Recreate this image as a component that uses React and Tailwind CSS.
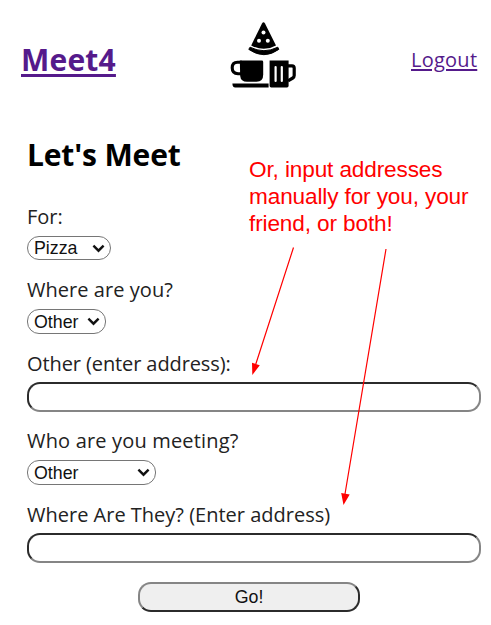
import React from "react";

function Logo() {
  return (
    <svg width="68" height="68" viewBox="0 0 68 68" className="block">
      <path d="M32 1.4Q33.5 -0.8 35 1.4L46 23.4Q34 30.2 21.2 23.4Z" fill="#000" />
      <path d="M20 25.2Q34 32.2 47.8 25.2L48.8 27.4Q34 38 18.8 27.4Z" fill="#000" stroke="#000" strokeWidth="1" strokeLinejoin="round" />
      <circle cx="33.5" cy="10.4" r="2" fill="#fff" />
      <circle cx="29" cy="18.8" r="2" fill="#fff" />
      <circle cx="37.8" cy="18.8" r="2" fill="#fff" />
      <path d="M9.8 38.6H31.8Q33.2 38.6 33.2 40V52.5Q33.2 59.8 26.5 59.8H17Q10.8 59.8 10.2 54Z" fill="#000" />
      <path d="M12 40.2H7.5Q2.2 40.2 2.2 45.8Q2.2 51.6 8 51.8H12" fill="none" stroke="#000" strokeWidth="3.1" />
      <path d="M2.4 61.4H38.6V65.4H5.2Q2.4 65.4 2.4 61.4Z" fill="#000" />
      <path d="M39.6 38.6H58.6V63.8Q58.6 65.4 57 65.4H41.2Q39.6 65.4 39.6 63.8Z" fill="#000" />
      <path d="M58 43.8H62Q64.2 43.8 64.2 46V53.6Q64.2 55.2 62.8 56L58 58.8" fill="none" stroke="#000" strokeWidth="3.2" />
      <path d="M45.6 45V59M51.8 45V59" fill="none" stroke="#fff" strokeWidth="2.2" strokeLinecap="round" />
    </svg>
  );
}

function Label({ children, className }) {
  return (
    <label className={`block h-6 whitespace-nowrap text-[20px] leading-[26px] text-[#222] ${className}`}>
      {children}
    </label>
  );
}

function Select({ value, className }) {
  return (
    <div className={`relative ${className}`}>
      <select className="block h-full w-full appearance-none rounded-[12px] border border-[#767676] bg-white pl-[6px] font-['Liberation_Sans',Arial,sans-serif] text-[17.8px] leading-[22px] text-[#111] outline-none">
        <option>{value}</option>
      </select>
      <svg className="pointer-events-none absolute top-[8px] right-[6px]" width="13" height="9" viewBox="0 0 13 9">
        <path d="M1.4 1.7L6.5 6.7L11.6 1.7" fill="none" stroke="#111" strokeWidth="2.4" />
      </svg>
    </div>
  );
}

function AddressInput({ className }) {
  return (
    <input
      type="text"
      className={`block w-[454px] rounded-[13px] border-2 border-t-[#2b2b2b] border-r-[#858585] border-b-[#858585] border-l-[#2b2b2b] bg-white px-2 outline-none ${className}`}
    />
  );
}

function Annotation() {
  return (
    <div className="pointer-events-none absolute inset-0 text-[#f00]">
      <p className="absolute top-[156px] left-[249px] font-['Liberation_Sans',Arial,sans-serif] text-[22.6px] leading-[27px] tracking-[-0.13px] whitespace-nowrap">
        Or, input addresses
        <br />
        manually for you, your
        <br />
        friend, or both!
      </p>
      <svg className="absolute inset-0" width="491" height="625" viewBox="0 0 491 625">
        <path d="M293.5 247.5L255.5 365M386 249L345 494" fill="none" stroke="#f00" strokeWidth="1.2" />
        <path d="M252.3 375L252 362.8L259.8 365.2ZM343.5 505L341.2 493L349.7 494.4Z" fill="#f00" />
      </svg>
    </div>
  );
}

export default function App() {
  return (
    <div className="relative h-[625px] w-[491px] overflow-hidden bg-white font-['Open_Sans','Noto_Sans',sans-serif]">
      <header className="flex h-[120px] justify-between pr-[14px] pl-[21px]">
        <a href="#" className="mt-[40px] h-10 w-[95px] text-[30px] leading-10 font-bold tracking-[0.2px] whitespace-nowrap text-[#551a8b] underline decoration-[3px] underline-offset-[3px]">
          Meet4
        </a>
        <div className="mt-[22px]">
          <Logo />
        </div>
        <a href="#" className="mt-[46px] h-7 w-[66px] text-[20px] leading-7 tracking-[0.25px] whitespace-nowrap text-[#551a8b] underline decoration-2 underline-offset-[2px]">
          Logout
        </a>
      </header>
      <main className="pl-[27px]">
        <h1 className="mt-[15px] h-10 text-[30px] leading-10 font-bold tracking-[-0.15px] whitespace-nowrap text-black">Let's Meet</h1>
        <form className="flex flex-col">
          <Label className="mt-[29px]">For:</Label>
          <Select value="Pizza" className="mt-2 h-6 w-[84px]" />
          <Label className="mt-[17px] tracking-[0.05px]">Where are you?</Label>
          <Select value="Other" className="mt-2 h-[25px] w-[79px]" />
          <Label className="mt-[17px] tracking-[-0.1px]">Other (enter address):</Label>
          <AddressInput className="mt-[7px] h-[30px]" />
          <Label className="mt-4 tracking-[0.17px]">Who are you meeting?</Label>
          <Select value="Other" className="mt-2 h-[25px] w-[129px]" />
          <Label className="mt-[17px]">Where Are They? (Enter address)</Label>
          <AddressInput className="mt-[7px] h-[30px]" />
          <button
            type="button"
            className="mt-[19px] ml-[111px] h-[30px] w-[222px] rounded-[13px] border-2 border-t-[#858585] border-r-[#2b2b2b] border-b-[#2b2b2b] border-l-[#858585] bg-[#efefef] pt-px font-['Liberation_Sans',Arial,sans-serif] text-[17.8px] leading-none text-[#111]"
          >
            Go!
          </button>
        </form>
      </main>
      <Annotation />
    </div>
  );
}
